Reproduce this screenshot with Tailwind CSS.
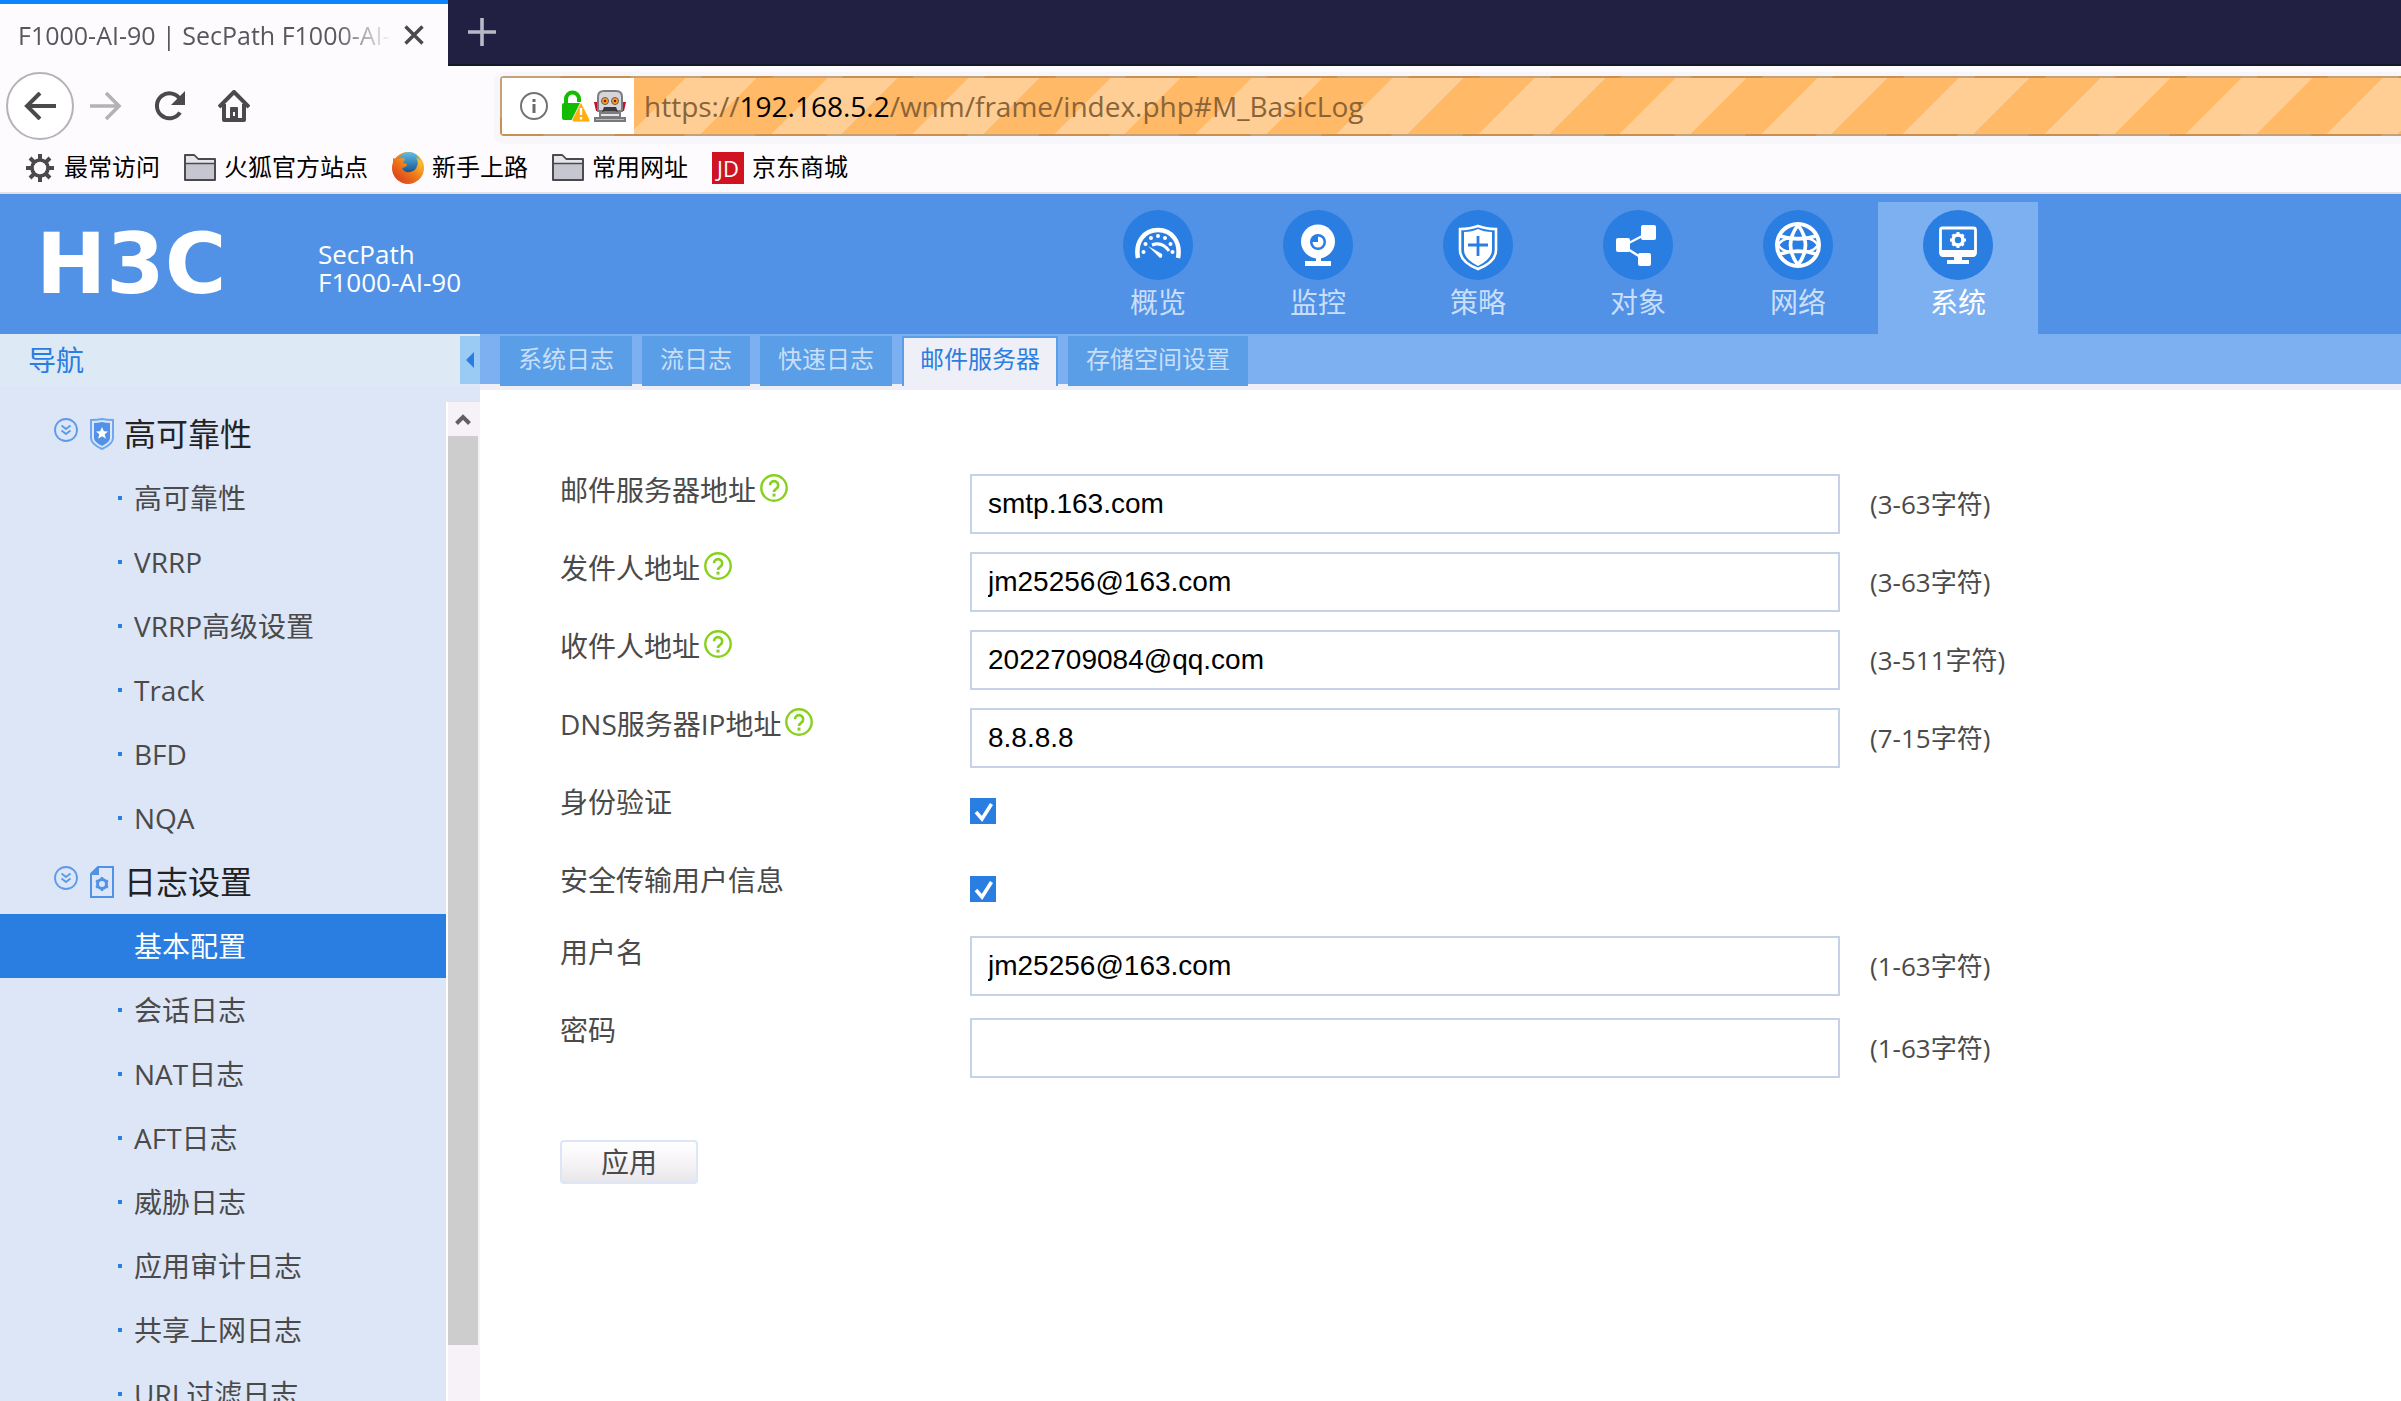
<!DOCTYPE html>
<html lang="zh-CN">
<head>
    <meta charset="UTF-8">
    <title>F1000-AI-90 | SecPath F1000-AI-90</title>
    <script src="https://cdn.jsdelivr.net/npm/@tailwindcss/browser@4"></script>
</head>
<body class="h-screen flex flex-col overflow-hidden bg-white text-[#4a4a4a] font-['Open_Sans','Noto_Sans_CJK_SC',sans-serif]">

    <!-- Shared icons -->
    <svg class="hidden">
        <symbol id="i-help" viewBox="0 0 28 28">
            <circle cx="14" cy="14" r="12.7" fill="none" stroke="#86d11c" stroke-width="2.4"/>
            <path d="M10 11.2a4.1 4.1 0 1 1 6.4 3.4c-1.500 1-2.400 1.700-2.400 3.400" fill="none" stroke="#86d11c" stroke-width="2.600"/>
            <rect x="12.500" y="19.600" width="3" height="3" fill="#86d11c"/>
        </symbol>
        <symbol id="i-fold" viewBox="0 0 24 24">
            <circle cx="12" cy="12" r="11" fill="none" stroke="#5c9bea" stroke-width="1.800"/>
            <path d="M7.500 7.500l4.500 3.500 4.500-3.500M7.500 12.500l4.500 3.500 4.500-3.500" fill="none" stroke="#5c9bea" stroke-width="2"/>
        </symbol>
        <symbol id="i-folder" viewBox="0 0 32 32">
            <path d="M1 28V3h9l4 4h17v21z" fill="#c6c6d0" stroke="#4a4a4f" stroke-width="2" stroke-linejoin="round"/>
            <path d="M2 4h8l4 4h16v3H2z" fill="#e4e4ea"/>
            <path d="M1 11.500h30" stroke="#4a4a4f" stroke-width="1.500"/>
        </symbol>
    </svg>

    <!-- Tab strip -->
    <div class="flex h-[66px] shrink-0 bg-[#222042]">
        <div class="flex w-[448px] items-center border-t-4 border-[#0a84ff] bg-[#fefbff] pl-[18px] pr-6">
            <span class="flex-1 overflow-hidden whitespace-nowrap text-[25px] leading-8 text-[#58585c] mask-r-from-85% mask-r-to-100%">F1000-AI-90 | SecPath F1000-AI-90</span>
            <button aria-label="关闭标签页" class="ml-3">
                <svg class="size-5" viewBox="0 0 20 20"><path d="M1.500 1.500l17 17M18.500 1.500l-17 17" stroke="#4a4a4c" stroke-width="3.400"/></svg>
            </button>
        </div>
        <div class="flex flex-1 items-center border-b-2 border-[#151a2b] pl-5">
            <button aria-label="新建标签页">
                <svg class="size-7" viewBox="0 0 28 28"><path d="M0 14h28M14 0v28" stroke="#b9b8c6" stroke-width="3.600"/></svg>
            </button>
        </div>
    </div>

    <!-- Toolbar -->
    <div class="flex h-20 shrink-0 items-center bg-[#fefbff] pl-1.5">
        <button aria-label="后退" class="flex size-[68px] items-center justify-center rounded-full border-2 border-[#b5b3b7] bg-white">
            <svg class="h-7 w-8" viewBox="0 0 32 28" fill="none" stroke="#4a4a4c" stroke-width="4"><path d="M32 14H3M16 1L3 14l13 13"/></svg>
        </button>
        <button aria-label="前进" class="ml-4">
            <svg class="h-7 w-8" viewBox="0 0 32 28" fill="none" stroke="#b4b2b6" stroke-width="3.600"><path d="M0 14h29M16 1l13 13-13 13"/></svg>
        </button>
        <button aria-label="刷新" class="ml-8">
            <svg class="size-8" viewBox="0 0 32 32" fill="none" stroke="#4a4a4c" stroke-width="4"><path d="M26 22.500A12.500 12.500 0 1 1 26.500 10"/><path d="M31 1v14H17z" fill="#4a4a4c" stroke="none"/></svg>
        </button>
        <button aria-label="主页" class="ml-8">
            <svg class="size-8" viewBox="0 0 32 32"><path d="M1 17L16 2l15 15M6 14v16h20V14" fill="none" stroke="#4a4a4c" stroke-width="4" stroke-linejoin="round"/><path d="M12 30V18q0-1 1-1h6q1 0 1 1v12z" fill="#4a4a4c"/><rect x="15" y="22" width="2" height="4" fill="#fefbff"/></svg>
        </button>
        <div class="-mr-4 ml-[250px] flex h-[60px] flex-1 rounded-sm border-2 border-black/22 bg-[repeating-linear-gradient(135deg,#ffb967_0_30px,#ffce94_30px_80px,#ffb967_80px_100px)] shadow-[0_2px_0_6px_#f7f7fb]">
            <div class="flex w-[132px] items-center bg-white pl-[18px]">
                <svg class="size-7" viewBox="0 0 28 28"><circle cx="14" cy="14" r="13" fill="none" stroke="#737376" stroke-width="2"/><rect x="12.500" y="12" width="3" height="9" fill="#6a6a6d"/><rect x="12.500" y="7" width="3" height="3" fill="#6a6a6d"/></svg>
                <svg class="ml-3.5 h-8 w-7" viewBox="0 0 28 32">
                    <path d="M4 16V9a6.500 6.500 0 0 1 13 0v3" fill="none" stroke="#12bc00" stroke-width="4"/>
                    <path d="M0 15q0-2 2-2h16v17H2q-2 0-2-2z" fill="#12bc00"/>
                    <path d="M19 12l9 18q0 2-2 2H12q-2 0-2-2z" fill="#ffae0d" stroke="#fff" stroke-width="0.800"/>
                    <path d="M19 18v7M19 27v2.500" stroke="#fff" stroke-width="2.400"/>
                </svg>
                <svg class="ml-1 size-8" viewBox="0 0 32 32">
                    <path d="M0 12h4v9H2zM28 12h4l-2 9h-2z" fill="#c2102a"/>
                    <path d="M4 7q0-6 6-6h12q6 0 6 6v14H4z" fill="#d6d6da" stroke="#7b7b80" stroke-width="2"/>
                    <circle cx="11" cy="11" r="3.500" fill="#f5a623" stroke="#5b5b60"/><circle cx="21" cy="11" r="3.500" fill="#f5a623" stroke="#5b5b60"/>
                    <circle cx="11" cy="11" r="1.300" fill="#b00"/><circle cx="21" cy="11" r="1.300" fill="#b00"/>
                    <path d="M8 22l2-5h12l2 5-3-1H11z" fill="#3a3a3e"/>
                    <path d="M6 23h20v4H6z" fill="#e5e5e8" stroke="#7b7b80" stroke-width="2"/>
                    <path d="M1 28h30v3H1z" fill="#b7b7bc" stroke="#77777c" stroke-width="2"/>
                </svg>
            </div>
            <div role="textbox" aria-label="地址" contenteditable="true" spellcheck="false" class="flex-1 self-center whitespace-nowrap pl-[10px] text-[28px] leading-10 text-[#8a6439]">https://<span class="text-black">192.168.5.2</span>/wnm/frame/index.php#M_BasicLog</div>
        </div>
    </div>

    <!-- Bookmarks -->
    <div class="flex h-12 shrink-0 items-start gap-6 border-b-2 border-[#e3e0e8] bg-[#fefbff] pl-6 pt-1.5 text-2xl leading-[30px] text-black">
        <a href="#" class="flex gap-2">
            <svg class="size-8" viewBox="0 0 32 32" stroke="#4a4a4c" fill="none"><circle cx="16" cy="16" r="8" stroke-width="3.600"/><path d="M16 2v5M16 25v5M2 16h5M25 16h5M6 6l4 4M22 22l4 4M26 6l-4 4M10 22l-4 4" stroke-width="4"/></svg>
            最常访问
        </a>
        <a href="#" class="flex gap-2"><svg class="size-8"><use href="#i-folder"/></svg>火狐官方站点</a>
        <a href="#" class="flex gap-2">
            <svg class="size-8" viewBox="0 0 32 32">
                <defs>
                    <linearGradient id="fox" x1="0" y1="1" x2="1" y2="0"><stop offset="0" stop-color="#d6331f"/><stop offset=".5" stop-color="#ef7a1a"/><stop offset="1" stop-color="#ffd83a"/></linearGradient>
                    <linearGradient id="globe" x1="0" y1="0" x2="0" y2="1"><stop offset="0" stop-color="#5fc0e8"/><stop offset="1" stop-color="#124a86"/></linearGradient>
                </defs>
                <circle cx="16" cy="16" r="16" fill="url(#fox)"/>
                <circle cx="17" cy="11" r="11" fill="url(#globe)"/>
                <path d="M1 6q2 1 5 1 4-2 7 0l-2 4 4 1q0 3-5 4 2 5 8 4 6-1 7-6 2-3-1-9 6 4 6 10 0 12-13 14Q4 29 1 18z" fill="url(#fox)"/>
            </svg>
            新手上路
        </a>
        <a href="#" class="flex gap-2"><svg class="size-8"><use href="#i-folder"/></svg>常用网址</a>
        <a href="#" class="flex gap-2"><span class="size-8 bg-[#cf1322] text-center text-[22px] leading-8 text-white">JD</span>京东商城</a>
    </div>

    <!-- Product header -->
    <header class="flex h-[140px] shrink-0 bg-[#5192e7] text-white">
        <div class="flex w-[1078px] items-center">
            <a href="#" class="w-[318px] pl-9 font-['DejaVu_Sans',sans-serif] text-[84px] font-bold leading-[84px]">H3C</a>
            <p class="pt-2 text-[26px] leading-7">SecPath<br>F1000-AI-90</p>
        </div>
        <nav class="flex pt-2 text-[28px] leading-9 text-[#c9def9]">
            <a href="#" class="flex w-40 flex-col items-center gap-1 pt-2">
                <svg class="size-[70px]" viewBox="0 0 70 70">
                    <circle cx="35" cy="35" r="35" fill="#2a7de1"/>
                    <path d="M15 48C12 32 21 20 35 20s23 12 20 28" fill="none" stroke="#fff" stroke-width="4.500"/>
                    <g fill="#fff"><circle cx="20.500" cy="42" r="2"/><circle cx="22.500" cy="34" r="2"/><circle cx="28" cy="28" r="2"/><circle cx="35" cy="26" r="2"/><circle cx="42" cy="28" r="2"/><circle cx="47.500" cy="34" r="2"/><circle cx="49.500" cy="42" r="2"/><path d="M25 36l14 8q1 4-2 4z"/></g>
                    <path d="M29 35q10-4 17 6" fill="none" stroke="#fff" stroke-width="3"/>
                </svg>
                概览
            </a>
            <a href="#" class="flex w-40 flex-col items-center gap-1 pt-2">
                <svg class="size-[70px]" viewBox="0 0 70 70">
                    <circle cx="35" cy="35" r="35" fill="#2a7de1"/>
                    <circle cx="35" cy="31.500" r="17" fill="#fff"/>
                    <circle cx="35" cy="32" r="8" fill="#2a7de1"/>
                    <path d="M35 32v-5.500a5.500 5.500 0 1 1-5.500 5.500z" fill="#fff"/>
                    <path d="M33 47h5v4h10v5H22v-5h11z" fill="#fff"/>
                </svg>
                监控
            </a>
            <a href="#" class="flex w-40 flex-col items-center gap-1 pt-2">
                <svg class="size-[70px]" viewBox="0 0 70 70">
                    <circle cx="35" cy="35" r="35" fill="#2a7de1"/>
                    <path d="M17 19q10 0 18-3 8 3 18 3v21q0 12-18 19-18-7-18-19z" fill="none" stroke="#fff" stroke-width="2.600"/>
                    <path d="M21 22q8 0 14-3 6 3 14 3v18q0 9-14 16-14-7-14-16z" fill="#fff"/>
                    <path d="M35 26v20M25 35h20" stroke="#2a7de1" stroke-width="2.800"/>
                </svg>
                策略
            </a>
            <a href="#" class="flex w-40 flex-col items-center gap-1 pt-2">
                <svg class="size-[70px]" viewBox="0 0 70 70">
                    <circle cx="35" cy="35" r="35" fill="#2a7de1"/>
                    <path d="M45 23L20 36l22 14" fill="none" stroke="#fff" stroke-width="2.400"/>
                    <rect x="38" y="15" width="15" height="15" rx="2" fill="#fff"/><rect x="13" y="28" width="14" height="14" rx="2" fill="#fff"/><rect x="35" y="43" width="13" height="13" rx="2" fill="#fff"/>
                </svg>
                对象
            </a>
            <a href="#" class="flex w-40 flex-col items-center gap-1 pt-2">
                <svg class="size-[70px]" viewBox="0 0 70 70">
                    <circle cx="35" cy="35" r="35" fill="#2a7de1"/>
                    <g fill="none" stroke="#fff">
                        <circle cx="35" cy="35" r="21" stroke-width="4"/>
                        <path d="M35 15Q20 35 35 55M35 15q15 20 0 40M17 26q18 6 36 0M17 44q18-6 36 0" stroke-width="3.600"/>
                        <path d="M15 35q4-6 12-7h16q8 1 12 7-4 6-12 7H27q-8-1-12-7z" stroke-width="2.400"/>
                    </g>
                </svg>
                网络
            </a>
            <a href="#" class="flex w-40 flex-col items-center gap-1 bg-[#7db0f1] pt-2 text-white">
                <svg class="size-[70px]" viewBox="0 0 70 70">
                    <circle cx="35" cy="35" r="35" fill="#2a7de1"/>
                    <rect x="17.500" y="18" width="35" height="27" rx="2" fill="none" stroke="#fff" stroke-width="2.800"/>
                    <path d="M17 40h36v4q0 3-3 3H39v3h7v4H24v-4h7v-3H20q-3 0-3-3z" fill="#fff"/>
                    <circle cx="35" cy="30" r="5" fill="none" stroke="#fff" stroke-width="3.600"/>
                    <path d="M35 22v3M35 35v3M27 30h3M40 30h3M29.500 24.500l2 2M38.500 33.500l2 2M40.500 24.500l-2 2M31.500 33.500l-2 2" stroke="#fff" stroke-width="3"/>
                </svg>
                系统
            </a>
        </nav>
    </header>

    <div class="flex min-h-0 flex-1">
        <!-- Sidebar -->
        <aside class="flex w-[480px] shrink-0 flex-col bg-[#dde6f7]">
            <div class="flex h-[52px] shrink-0 items-start justify-between bg-[#dde9f5] pt-0.5">
                <h2 class="pl-7 text-[28px] leading-[48px] text-[#2a7de1]">导航</h2>
                <button aria-label="收起导航" class="flex h-12 w-5 items-center justify-center bg-[#9acbf5]">
                    <svg class="h-4 w-2" viewBox="0 0 8 16"><path d="M8 0v16L0 8z" fill="#2a7de1"/></svg>
                </button>
            </div>
            <div class="flex min-h-0 flex-1 pt-4">
                <div class="flex-1 overflow-hidden text-[28px] leading-[64px]">
                    <h3 class="flex h-16 items-center pl-[54px] text-[32px] text-[#222]">
                        <svg class="mb-2 size-6"><use href="#i-fold"/></svg>
                        <svg class="ml-3 mr-2.5 h-8 w-6" viewBox="0 0 24 32"><path d="M1 2q6 0 11-1 5 1 11 1v18q0 6-11 11Q1 26 1 20z" fill="none" stroke="#6fa7ee" stroke-width="2"/><path d="M4 5q4 0 8-1 4 1 8 1v15q0 4-8 8-8-4-8-8z" fill="#5192e7"/><path d="M12 9l1.800 4.200 4.200.3-3.300 2.800 1.200 4.500L12 18.300l-3.900 2.500 1.200-4.500L6 13.500l4.200-.3z" fill="#fff"/></svg>
                        高可靠性
                    </h3>
                    <ul>
                        <li class="flex items-center gap-3 pl-[118px]"><i class="size-1 bg-[#2a7de1]"></i><a href="#">高可靠性</a></li>
                        <li class="flex items-center gap-3 pl-[118px]"><i class="size-1 bg-[#2a7de1]"></i><a href="#">VRRP</a></li>
                        <li class="flex items-center gap-3 pl-[118px]"><i class="size-1 bg-[#2a7de1]"></i><a href="#">VRRP高级设置</a></li>
                        <li class="flex items-center gap-3 pl-[118px]"><i class="size-1 bg-[#2a7de1]"></i><a href="#">Track</a></li>
                        <li class="flex items-center gap-3 pl-[118px]"><i class="size-1 bg-[#2a7de1]"></i><a href="#">BFD</a></li>
                        <li class="flex items-center gap-3 pl-[118px]"><i class="size-1 bg-[#2a7de1]"></i><a href="#">NQA</a></li>
                    </ul>
                    <h3 class="flex h-16 items-center pl-[54px] text-[32px] text-[#222]">
                        <svg class="mb-2 size-6"><use href="#i-fold"/></svg>
                        <svg class="ml-3 mr-2.5 h-8 w-6" viewBox="0 0 24 32" fill="none" stroke="#5192e7"><path d="M1 8l7-7h15v30H1z" stroke-width="2"/><path d="M1 9V7l6-6h2v8z" fill="#5192e7" stroke="none"/><circle cx="12" cy="18" r="4.500" stroke-width="3"/><path d="M12 11v3M12 22v3M6 14.500l2 1.200M16 20.300l2 1.200M18 14.500l-2 1.200M8 20.300l-2 1.200" stroke-width="2.400"/></svg>
                        日志设置
                    </h3>
                    <ul>
                        <li class="bg-[#2a7de1] pl-[134px] text-white"><a href="#">基本配置</a></li>
                        <li class="flex items-center gap-3 pl-[118px]"><i class="size-1 bg-[#2a7de1]"></i><a href="#">会话日志</a></li>
                        <li class="flex items-center gap-3 pl-[118px]"><i class="size-1 bg-[#2a7de1]"></i><a href="#">NAT日志</a></li>
                        <li class="flex items-center gap-3 pl-[118px]"><i class="size-1 bg-[#2a7de1]"></i><a href="#">AFT日志</a></li>
                        <li class="flex items-center gap-3 pl-[118px]"><i class="size-1 bg-[#2a7de1]"></i><a href="#">威胁日志</a></li>
                        <li class="flex items-center gap-3 pl-[118px]"><i class="size-1 bg-[#2a7de1]"></i><a href="#">应用审计日志</a></li>
                        <li class="flex items-center gap-3 pl-[118px]"><i class="size-1 bg-[#2a7de1]"></i><a href="#">共享上网日志</a></li>
                        <li class="flex items-center gap-3 pl-[118px]"><i class="size-1 bg-[#2a7de1]"></i><a href="#">URL过滤日志</a></li>
                    </ul>
                </div>
                <!-- Scrollbar -->
                <div class="flex w-[34px] flex-col border-l-2 border-white bg-[#f7f2f7] pr-0.5">
                    <div class="flex h-[34px] shrink-0 items-center justify-center">
                        <svg class="h-3 w-4" viewBox="0 0 16 12"><path d="M1.500 10.500L8 4l6.500 6.500" fill="none" stroke="#606064" stroke-width="4"/></svg>
                    </div>
                    <div class="h-[91%] bg-[#cdcdcd]"></div>
                </div>
            </div>
        </aside>

        <main class="flex-1">
            <!-- Page tabs -->
            <div class="h-14 bg-linear-to-b from-[#7db0f1] from-[50px] to-[#efeff7] to-[50px] pl-5 pt-0.5">
                <nav class="flex gap-2.5 text-2xl leading-[46px] text-[#c9def9]">
                    <a href="#" class="h-[50px] bg-[#5a9ee7] px-[18px]">系统日志</a>
                    <a href="#" class="h-[50px] bg-[#5a9ee7] px-[18px]">流日志</a>
                    <a href="#" class="h-[50px] bg-[#5a9ee7] px-[18px]">快速日志</a>
                    <a href="#" class="h-[50px] border-x-2 border-t-2 border-[#5a9ee7] bg-[#efeff7] px-4 leading-[42px] text-[#2a7de1]">邮件服务器</a>
                    <a href="#" class="h-[50px] bg-[#5a9ee7] px-[18px]">存储空间设置</a>
                </nav>
            </div>

            <!-- Mail server form -->
            <form class="pl-20 pt-[84px] text-[28px] leading-8">
                <div class="flex h-[78px]">
                    <div class="flex w-[410px] items-start gap-1"><label for="server">邮件服务器地址</label><svg class="size-7"><use href="#i-help"/></svg></div>
                    <input id="server" type="text" value="smtp.163.com" class="h-[60px] w-[870px] border-2 border-[#c6d3e7] bg-white px-4 font-['Liberation_Sans',sans-serif] text-black">
                    <span class="pl-[30px] text-[26px] leading-[60px]">(3-63字符)</span>
                </div>
                <div class="flex h-[78px]">
                    <div class="flex w-[410px] items-start gap-1"><label for="sender">发件人地址</label><svg class="size-7"><use href="#i-help"/></svg></div>
                    <input id="sender" type="text" value="jm25256@163.com" class="h-[60px] w-[870px] border-2 border-[#c6d3e7] bg-white px-4 font-['Liberation_Sans',sans-serif] text-black">
                    <span class="pl-[30px] text-[26px] leading-[60px]">(3-63字符)</span>
                </div>
                <div class="flex h-[78px]">
                    <div class="flex w-[410px] items-start gap-1"><label for="receiver">收件人地址</label><svg class="size-7"><use href="#i-help"/></svg></div>
                    <input id="receiver" type="text" value="2022709084@qq.com" class="h-[60px] w-[870px] border-2 border-[#c6d3e7] bg-white px-4 font-['Liberation_Sans',sans-serif] text-black">
                    <span class="pl-[30px] text-[26px] leading-[60px]">(3-511字符)</span>
                </div>
                <div class="flex h-[78px]">
                    <div class="flex w-[410px] items-start gap-1"><label for="dns">DNS服务器IP地址</label><svg class="size-7"><use href="#i-help"/></svg></div>
                    <input id="dns" type="text" value="8.8.8.8" class="h-[60px] w-[870px] border-2 border-[#c6d3e7] bg-white px-4 font-['Liberation_Sans',sans-serif] text-black">
                    <span class="pl-[30px] text-[26px] leading-[60px]">(7-15字符)</span>
                </div>
                <div class="flex h-[78px]">
                    <label for="auth" class="w-[410px]">身份验证</label>
                    <div class="relative mt-3 size-[26px]">
                        <input id="auth" type="checkbox" checked class="peer block size-[26px] appearance-none border-2 border-[#2a7de1] checked:bg-[#2a7de1]">
                        <svg class="pointer-events-none absolute inset-0 hidden peer-checked:block" viewBox="0 0 26 26"><path d="M6 14l6 7L21.500 6" fill="none" stroke="#fff" stroke-width="3.600"/></svg>
                    </div>
                </div>
                <div class="flex h-[72px]">
                    <label for="secure" class="w-[410px]">安全传输用户信息</label>
                    <div class="relative mt-3 size-[26px]">
                        <input id="secure" type="checkbox" checked class="peer block size-[26px] appearance-none border-2 border-[#2a7de1] checked:bg-[#2a7de1]">
                        <svg class="pointer-events-none absolute inset-0 hidden peer-checked:block" viewBox="0 0 26 26"><path d="M6 14l6 7L21.500 6" fill="none" stroke="#fff" stroke-width="3.600"/></svg>
                    </div>
                </div>
                <div class="flex h-[78px]">
                    <label for="user" class="w-[410px]">用户名</label>
                    <input id="user" type="text" value="jm25256@163.com" class="h-[60px] w-[870px] border-2 border-[#c6d3e7] bg-white px-4 font-['Liberation_Sans',sans-serif] text-black">
                    <span class="pl-[30px] text-[26px] leading-[60px]">(1-63字符)</span>
                </div>
                <div class="flex">
                    <label for="password" class="w-[410px]">密码</label>
                    <div class="flex pt-1">
                        <input id="password" type="password" class="h-[60px] w-[870px] border-2 border-[#c6d3e7] bg-white px-4 font-['Liberation_Sans',sans-serif] text-black">
                        <span class="pl-[30px] text-[26px] leading-[60px]">(1-63字符)</span>
                    </div>
                </div>
                <button type="submit" class="mt-[62px] h-11 w-[138px] rounded-sm border-2 border-[#dde6f7] bg-linear-to-b from-white via-[#f7f4f8] to-[#e9e6ea] leading-10">应用</button>
            </form>
        </main>
    </div>
</body>
</html>
